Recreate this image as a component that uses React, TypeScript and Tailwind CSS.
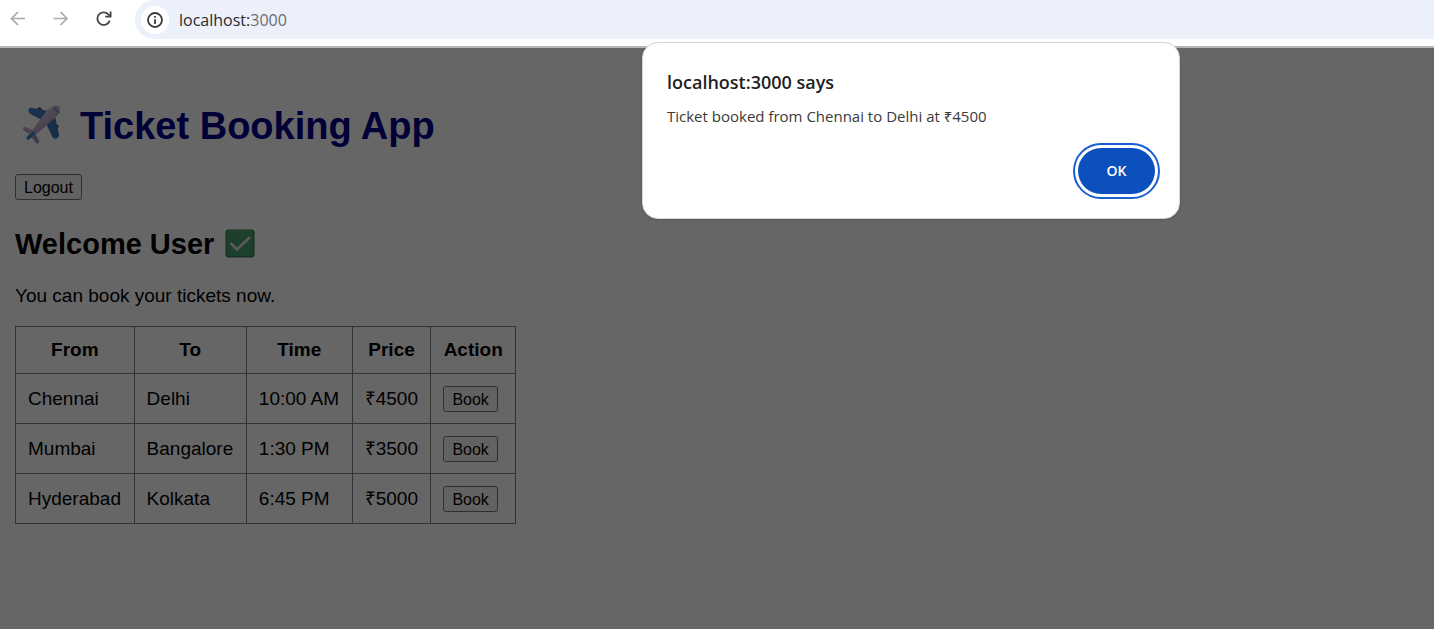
import React, { useState } from 'react';

type Trip = { from: string; to: string; time: string; price: number };

const trips: Trip[] = [
  { from: 'Chennai', to: 'Delhi', time: '10:00 AM', price: 4500 },
  { from: 'Mumbai', to: 'Bangalore', time: '1:30 PM', price: 3500 },
  { from: 'Hyderabad', to: 'Kolkata', time: '6:45 PM', price: 5000 },
];

const headings = ['From', 'To', 'Time', 'Price', 'Action'];

function BrowserBar() {
  return (
    <header className="flex h-12 items-start border-b-2 border-[#b4b9b6] bg-white">
      <nav className="flex h-[38px] items-center gap-[27px] pl-[10px] pr-[23px]" aria-label="Browser">
        <button type="button" aria-label="Back" className="text-[#a9a9a9]">
          <svg width="16" height="16" viewBox="0 0 16 16" fill="none" stroke="currentColor" strokeWidth="1.7">
            <path d="M15 7.5H1.500M8 1 1.500 7.500 8 14" />
          </svg>
        </button>
        <button type="button" aria-label="Forward" className="text-[#a9a9a9]">
          <svg width="16" height="16" viewBox="0 0 16 16" fill="none" stroke="currentColor" strokeWidth="1.7">
            <path d="M.5 7.5H14M7.500 1 14 7.500 7.500 14" />
          </svg>
        </button>
        <button type="button" aria-label="Reload" className="text-[#474747]">
          <svg width="16" height="16" viewBox="0 0 16 16" fill="none" stroke="currentColor" strokeWidth="1.8">
            <path d="M13.700 9.600A6.300 6.300 0 1 1 12.300 3.300L14 5" />
            <path d="M14.600 .5V5.600H9.200" />
          </svg>
        </button>
      </nav>
      <div className="flex h-[39px] flex-1 items-center gap-[10px] rounded-l-full bg-[#ebf0fa] pl-[6px]">
        <button
          type="button"
          aria-label="Site information"
          className="flex size-7 items-center justify-center rounded-full bg-white text-[#3c3c3c]"
        >
          <svg width="16" height="16" viewBox="0 0 16 16" fill="none" stroke="currentColor" strokeWidth="1.800">
            <circle cx="8" cy="8" r="7" />
            <path d="M8 7.200V12M8 4V5.800" />
          </svg>
        </button>
        <span className="font-['Open_Sans','Noto_Sans',sans-serif] text-base text-[#2b2b2b]">
          localhost:<span className="text-[#6b6b6b]">3000</span>
        </span>
      </div>
    </header>
  );
}

function Plane() {
  return (
    <svg width="42" height="44" viewBox="0 3 126 132" role="img" aria-label="Airplane">
      <defs>
        <linearGradient id="hull" x1="0.3" y1="0.2" x2="0.7" y2="0.8">
          <stop offset="0" stopColor="#d3c8de" />
          <stop offset="1" stopColor="#a994b4" />
        </linearGradient>
      </defs>
      <path d="M52 16q6-6 11-2l6 8-12 4zM104 64l9 1q6 4 0 12l-9 4z" fill="#5c5965" />
      <path d="M25 22q1-8 9-8L86 25 64 50 30 32q-6-4-5-10z" fill="#3c7cc4" />
      <path d="M105 40l12 56q-1 10-11 11-6 0-9-6L80 65z" fill="#3873b8" />
      <path d="M9 76q0-6 6-4l26 10-8 14-17-10q-7-4-7-10z" fill="#b7a5c4" />
      <path d="M45 90l13 24q0 7-5 8-4 0-7-4L32 98z" fill="#a58fb1" />
      <path d="M82 21Q99 6 112 8q9 1 8 10-1 14-17 29L47 95q-10 10-18 8-5-4 4-17z" fill="url(#hull)" />
      <path d="M42 85q5 0 3 7L30 108q-7 4-10 0-2-5 2-9z" fill="#417fc4" />
      <path d="M103 15l13 13" stroke="#3d8fc5" strokeWidth="5" strokeLinecap="round" />
    </svg>
  );
}

function CheckMark() {
  return (
    <svg width="30" height="30" viewBox="0 0 30 30" role="img" aria-label="Done">
      <rect x="0.500" y="0.500" width="29" height="28" rx="3" fill="#357f55" />
      <rect x="2" y="1" width="26" height="26" rx="3" fill="#46a06d" />
      <path d="M6.500 15 12 20.500 24 9" fill="none" stroke="#dedede" strokeWidth="2.800" strokeLinecap="round" strokeLinejoin="round" />
    </svg>
  );
}

function PlainButton({ children, onClick }: { children: React.ReactNode; onClick?: () => void }) {
  return (
    <button
      type="button"
      onClick={onClick}
      className="block h-[26px] rounded-[3px] border border-[#767676] bg-[#f6f6f6] px-2 text-base leading-[23px] text-black"
    >
      {children}
    </button>
  );
}

function BookedDialog({ trip, onClose }: { trip: Trip; onClose: () => void }) {
  return (
    <div
      role="dialog"
      aria-modal="true"
      aria-labelledby="dialog-title"
      className="absolute left-[642px] top-[42px] flex w-[538px] flex-col rounded-2xl border border-[#d3d5d5] bg-white px-6 pb-6 pt-[25px] font-['Open_Sans','Noto_Sans',sans-serif] shadow-sm"
    >
      <h2 id="dialog-title" className="text-lg font-semibold leading-7 text-[#1f1f1f]">
        localhost:3000 says
      </h2>
      <p className="mt-2 text-[15px] leading-6 text-[#3a3a3a]">
        Ticket booked from {trip.from} to {trip.to} at ₹{trip.price}
      </p>
      <button
        type="button"
        onClick={onClose}
        className="mt-5 h-[46px] w-[77px] self-end rounded-full bg-[#0b50bd] text-sm font-semibold text-white outline-2 outline-offset-3 outline-[#1a5fd0]"
      >
        OK
      </button>
    </div>
  );
}

export default function App() {
  const [booked, setBooked] = useState<Trip | null>(trips[0]);

  return (
    <div className="relative flex min-h-screen flex-col bg-white font-['Liberation_Sans',Arial,sans-serif]">
      <BrowserBar />
      <main className="relative flex-1 px-[15px] pb-12 pt-14 text-[19px] leading-[22px] text-black">
        <h1 className="flex items-center gap-[18px] pl-[5px] text-[38px] font-bold leading-[44px] text-[#00008b]">
          <Plane />
          Ticket Booking App
        </h1>
        <div className="mt-[26px]">
          <PlainButton>Logout</PlainButton>
        </div>
        <h2 className="mt-7 flex items-center gap-[11px] text-[29px] font-bold leading-8">
          Welcome User
          <CheckMark />
        </h2>
        <p className="mt-[25px]">You can book your tickets now.</p>
        <table className="mt-[19px] w-[501px] border-collapse">
          <thead>
            <tr>
              {headings.map((heading) => (
                <th key={heading} scope="col" className="border border-[#808080] p-3 font-bold">
                  {heading}
                </th>
              ))}
            </tr>
          </thead>
          <tbody>
            {trips.map((trip) => (
              <tr key={trip.from}>
                <td className="border border-[#808080] px-3">{trip.from}</td>
                <td className="border border-[#808080] px-3">{trip.to}</td>
                <td className="border border-[#808080] px-3">{trip.time}</td>
                <td className="border border-[#808080] px-3">₹{trip.price}</td>
                <td className="border border-[#808080] px-3 pb-[11px] pt-3">
                  <PlainButton onClick={() => setBooked(trip)}>Book</PlainButton>
                </td>
              </tr>
            ))}
          </tbody>
        </table>
        {booked && <div className="absolute inset-0 bg-black/60" />}
      </main>
      {booked && <BookedDialog trip={booked} onClose={() => setBooked(null)} />}
    </div>
  );
}
